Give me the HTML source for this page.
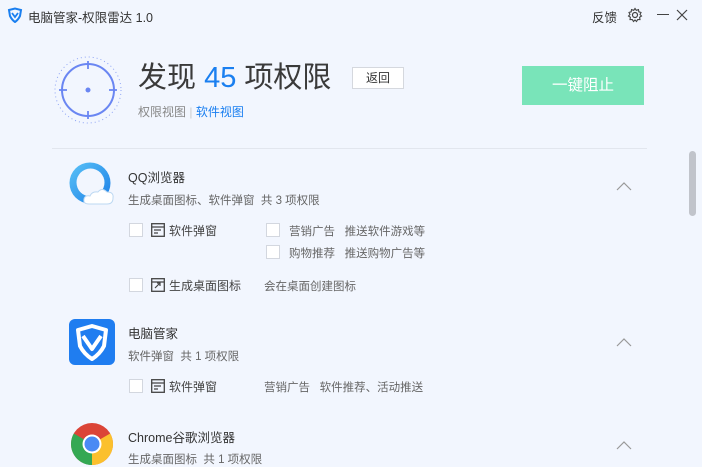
<!DOCTYPE html>
<html><head><meta charset="utf-8"><style>
*{margin:0;padding:0;box-sizing:border-box}
body{width:702px;height:464px;overflow:hidden;background:#f2f6fe;font-family:"Liberation Sans","Noto Sans CJK SC",sans-serif;color:#333;position:relative}
.a{position:absolute;white-space:nowrap}
.cb{position:absolute;width:14px;height:14px;border:1px solid #d3d7df;background:#fff}
.g{color:#666;font-size:11.5px}
.t{font-size:12.5px;color:#333}
.it{font-size:12px;color:#444}
</style></head><body>
<svg class="a" style="left:7px;top:7px" width="16" height="16" viewBox="0 0 16 16"><path d="M2 3 L8 1.5 L14 3 L13 9 Q11 13 8 15 Q5 13 3 9 Z" fill="none" stroke="#1a7ff0" stroke-width="2"/><path d="M5 6 L8 10 L11 6" fill="none" stroke="#1a7ff0" stroke-width="1.8"/></svg>
<div class="a" style="left:28px;top:7px;font-size:12.5px;color:#333">电脑管家-权限雷达 1.0</div>
<div class="a" style="left:592px;top:7px;font-size:12.5px;color:#333">反馈</div>
<svg class="a" style="left:627px;top:7px" width="16" height="16" viewBox="0 0 16 16"><circle cx="8" cy="8" r="2.5" fill="none" stroke="#444" stroke-width="1.2"/><path d="M8 1.5 L9.3 3.3 L11.5 2.6 L11.8 4.8 L14 5.5 L13 7.5 L14.5 9 L12.6 10.3 L13 12.6 L10.7 12.6 L9.5 14.5 L8 13 L6.5 14.5 L5.3 12.6 L3 12.6 L3.4 10.3 L1.5 9 L3 7.5 L2 5.5 L4.2 4.8 L4.5 2.6 L6.7 3.3 Z" fill="none" stroke="#444" stroke-width="1.1"/></svg>
<div class="a" style="left:657px;top:14px;width:12px;height:1.3px;background:#444"></div>
<svg class="a" style="left:676px;top:9px" width="12" height="12" viewBox="0 0 12 12"><path d="M1 1 L11 11 M11 1 L1 11" stroke="#444" stroke-width="1.2"/></svg>
<svg class="a" style="left:53px;top:55px" width="70" height="70" viewBox="0 0 70 70"><circle cx="35" cy="35" r="33" fill="none" stroke="#8ea4f5" stroke-width="1" stroke-dasharray="1 3"/><circle cx="35" cy="35" r="26" fill="none" stroke="#6a86f2" stroke-width="2"/><path d="M35 6 V14 M35 56 V64 M6 35 H14 M56 35 H64" stroke="#6a86f2" stroke-width="1.8"/><circle cx="35" cy="35" r="2.5" fill="#6a86f2"/></svg>
<div class="a" style="left:138px;top:58px;font-size:29px;color:#3a3a3a;line-height:40px">发现 <span style="color:#1a7ff0">45</span> 项权限</div>
<div class="a" style="left:352px;top:67px;width:52px;height:22px;border:1px solid #d5d8de;background:#fff;font-size:12px;text-align:center;line-height:20px;color:#333">返回</div>
<div class="a" style="left:138px;top:103px;font-size:12px;color:#888">权限视图 <span style="color:#ccc">|</span> <span style="color:#1a7ff0">软件视图</span></div>
<div class="a" style="left:522px;top:66px;width:122px;height:39px;background:#79e4b9;color:#fff;font-size:15.5px;text-align:center;line-height:39px">一键阻止</div>
<div class="a" style="left:52px;top:148px;width:595px;height:1px;background:#e2e6ee"></div>
<div class="a" style="left:689px;top:151px;width:7px;height:65px;background:#c1c4cb;border-radius:4px"></div>
<svg class="a" style="left:69px;top:162px" width="46" height="46" viewBox="0 0 46 46"><defs><linearGradient id="q" x1="0" y1="0" x2="1" y2="1"><stop offset="0" stop-color="#5bc3f7"/><stop offset="1" stop-color="#1a7de6"/></linearGradient></defs><circle cx="21" cy="21" r="20.5" fill="url(#q)"/><circle cx="21.5" cy="20.5" r="14" fill="#f2f6fe"/><path d="M20 42 Q14 42 15 37 Q16 33 21 34 Q23 29 29 30 Q33 25 38 30 Q45 30 44 36 Q44 42 38 42 Z" fill="#fff" stroke="#bcd8f2"/></svg>
<div class="a t" style="left:128px;top:167px">QQ浏览器</div>
<div class="a g" style="left:128px;top:192px">生成桌面图标、软件弹窗&nbsp;&nbsp;共 3 项权限</div>
<svg class="a" style="left:616px;top:181px" width="16" height="10"><path d="M1 9 L8 2 L15 9" fill="none" stroke="#999" stroke-width="1.2"/></svg>
<div class="cb" style="left:129px;top:223px"></div>
<svg class="a" style="left:151px;top:223px" width="14" height="14"><rect x=".7" y=".7" width="12.6" height="12.6" fill="none" stroke="#444" stroke-width="1.3"/><path d="M.7 4 H13.3 M3 7 H10 M3 10 H7" stroke="#444" stroke-width="1.2"/></svg>
<div class="a it" style="left:169px;top:222px">软件弹窗</div>
<div class="cb" style="left:266px;top:223px"></div>
<div class="a g" style="left:289px;top:223px">营销广告&nbsp;&nbsp;&nbsp;推送软件游戏等</div>
<div class="cb" style="left:266px;top:245px"></div>
<div class="a g" style="left:289px;top:245px">购物推荐&nbsp;&nbsp;&nbsp;推送购物广告等</div>
<div class="cb" style="left:129px;top:278px"></div>
<svg class="a" style="left:151px;top:278px" width="14" height="14"><rect x=".7" y=".7" width="12.6" height="12.6" fill="none" stroke="#444" stroke-width="1.3"/><path d="M.7 4 H13.3 M4 10 L9 5 M6 5 H9 V8" stroke="#444" stroke-width="1.2" fill="none"/></svg>
<div class="a it" style="left:169px;top:277px">生成桌面图标</div>
<div class="a g" style="left:264px;top:278px">会在桌面创建图标</div>
<svg class="a" style="left:69px;top:319px" width="46" height="46" viewBox="0 0 46 46"><rect width="46" height="46" rx="6" fill="#1f7df0"/><path d="M9 11 L23 7 L37 11 L35 27 Q31 35 23 40 Q15 35 11 27 Z" fill="none" stroke="#fff" stroke-width="4" stroke-linejoin="round"/><path d="M14 17 L23 30 L32 17" fill="none" stroke="#fff" stroke-width="4" stroke-linejoin="round"/></svg>
<div class="a t" style="left:128px;top:323px">电脑管家</div>
<div class="a g" style="left:128px;top:348px">软件弹窗&nbsp;&nbsp;共 1 项权限</div>
<svg class="a" style="left:616px;top:337px" width="16" height="10"><path d="M1 9 L8 2 L15 9" fill="none" stroke="#999" stroke-width="1.2"/></svg>
<div class="cb" style="left:129px;top:379px"></div>
<svg class="a" style="left:151px;top:379px" width="14" height="14"><rect x=".7" y=".7" width="12.6" height="12.6" fill="none" stroke="#444" stroke-width="1.3"/><path d="M.7 4 H13.3 M3 7 H10 M3 10 H7" stroke="#444" stroke-width="1.2"/></svg>
<div class="a it" style="left:169px;top:378px">软件弹窗</div>
<div class="a g" style="left:264px;top:379px">营销广告&nbsp;&nbsp;&nbsp;软件推荐、活动推送</div>
<svg class="a" style="left:70px;top:422px" width="44" height="44" viewBox="0 0 44 44"><circle cx="22" cy="22" r="21" fill="#db4437"/><path d="M22 22 L40.2 11.5 A21 21 0 0 1 22 43 Z" fill="#fbc02d"/><path d="M22 22 L22 43 A21 21 0 0 1 3.8 11.5 Z" fill="#34a853"/><circle cx="22" cy="22" r="9.5" fill="#fff"/><circle cx="22" cy="22" r="7.5" fill="#4a8af4"/></svg>
<div class="a t" style="left:128px;top:427px">Chrome谷歌浏览器</div>
<div class="a g" style="left:128px;top:451px">生成桌面图标&nbsp;&nbsp;共 1 项权限</div>
<svg class="a" style="left:616px;top:440px" width="16" height="10"><path d="M1 9 L8 2 L15 9" fill="none" stroke="#999" stroke-width="1.2"/></svg>
</body></html>
